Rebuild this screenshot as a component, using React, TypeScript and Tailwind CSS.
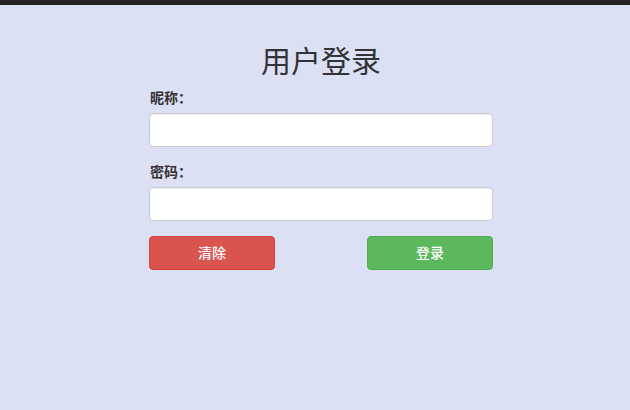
const App = () => {
  return (
    <div
      className="min-h-[410px] bg-[#dce0f5] text-[#333] text-sm"
      style={{ fontFamily: '"Liberation Sans", "Noto Sans CJK SC", sans-serif' }}
    >
      <div className="h-[5px] bg-[#222]" />
      <div className="ml-[149px] w-[344px] pt-[40px]">
        <h1 className="text-center text-[30px] leading-[33px] font-normal">用户登录</h1>
        <form className="mt-[10px]" onSubmit={(e) => e.preventDefault()}>
          <div className="mb-[15px]">
            <label className="block font-bold leading-5 mb-[5px] pl-px">昵称：</label>
            <input
              type="text"
              className="block w-full h-[34px] px-3 bg-white border border-[#ccc] rounded-[4px] shadow-[inset_0_1px_1px_rgba(0,0,0,0.075)] outline-none"
            />
          </div>
          <div className="mb-[15px]">
            <label className="block font-bold leading-5 mb-[5px] pl-px">密码：</label>
            <input
              type="password"
              className="block w-full h-[34px] px-3 bg-white border border-[#ccc] rounded-[4px] shadow-[inset_0_1px_1px_rgba(0,0,0,0.075)] outline-none"
            />
          </div>
          <div className="flex justify-between">
            <button
              type="reset"
              className="w-[126px] h-[34px] bg-[#d9534f] border border-[#d43f3a] rounded-[4px] text-white font-medium"
            >
              清除
            </button>
            <button
              type="submit"
              className="w-[126px] h-[34px] bg-[#5cb85c] border border-[#4cae4c] rounded-[4px] text-white font-medium"
            >
              登录
            </button>
          </div>
        </form>
      </div>
    </div>
  );
};

export default App;
